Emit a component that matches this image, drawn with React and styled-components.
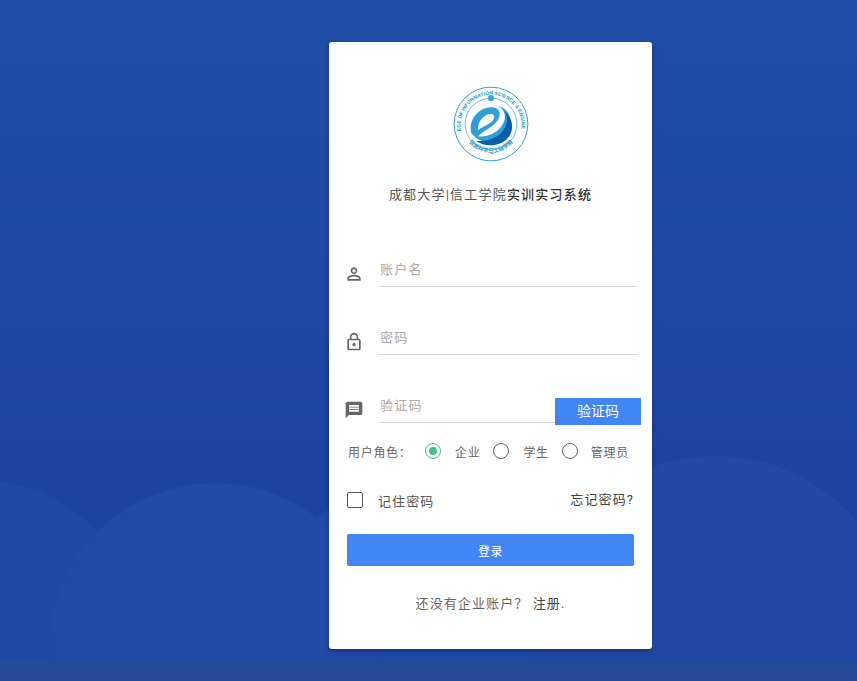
import React from "react";
import styled, { createGlobalStyle } from "styled-components";
import { MdPersonOutline, MdLockOutline, MdMessage } from "react-icons/md";

const GlobalStyle = createGlobalStyle`
  html, body {
    margin: 0;
    padding: 0;
    height: 100%;
    background: #1f4aa1;
    font-family: Roboto, "Noto Sans CJK SC", sans-serif;
  }
`;

const Page = styled.div`
  position: relative;
  box-sizing: border-box;
  width: 100%;
  height: 681px;
  overflow: hidden;
  padding: 42px 0 0 329px;
`;

const Backdrop = styled.svg`
  position: absolute;
  inset: 0;
  width: 100%;
  height: 100%;
`;

const Card = styled.main`
  position: relative;
  box-sizing: border-box;
  width: 323px;
  height: 607px;
  padding: 44px 18px 36px;
  background: #fff;
  border-radius: 3px;
  box-shadow: 0 2px 4px rgba(10, 30, 80, 0.55);
`;

const LogoWrap = styled.div`
  display: flex;
  justify-content: center;
  margin-left: 1px;
`;

const Title = styled.h1`
  margin: 23px 0 0;
  font-size: 13px;
  line-height: 20px;
  font-weight: 400;
  letter-spacing: 1.2px;
  text-align: center;
  color: #555;
  white-space: nowrap;

  b {
    font-weight: 500;
    color: #333;
  }
`;

const Field = styled.div`
  display: flex;
  align-items: flex-end;
  height: 32px;
  margin: ${(p) => (p.$first ? "50px" : "36px")} -3px 0 -3px;
`;

const FieldIcon = styled.span`
  display: flex;
  flex: none;
  width: 20px;
  height: 20px;
  margin: 0 15px 3px 0;
  color: #666;
  font-size: 20px;
`;

const Input = styled.input`
  flex: 1;
  min-width: 0;
  height: 32px;
  box-sizing: border-box;
  padding: 0 1px 2px;
  border: 0;
  border-bottom: 1px solid #ced4da;
  outline: none;
  background: transparent;
  font: inherit;
  font-size: 13px;
  letter-spacing: 1.2px;
  color: #555;

  &::placeholder {
    color: #aaa;
    opacity: 1;
  }
`;

const CodeButton = styled.button`
  flex: none;
  width: 86px;
  height: 27px;
  margin: 0 -4px -2px 0;
  padding: 0 0 3px;
  border: 0;
  background: #4285f4;
  color: #fff;
  font: inherit;
  font-size: 14px;
`;

const RoleRow = styled.div`
  display: flex;
  align-items: center;
  height: 20px;
  margin-top: 18px;
  padding-left: 1px;
  font-size: 12px;
  letter-spacing: 0.7px;
  color: #666;
`;

const RoleLabel = styled.span`
  width: 77px;
  flex: none;
`;

const RoleOption = styled.label`
  display: flex;
  align-items: center;
  gap: ${(p) => p.$gap}px;
  margin-right: ${(p) => p.$end}px;
`;

const Radio = styled.span`
  position: relative;
  box-sizing: border-box;
  width: 16px;
  height: 16px;
  border-radius: 50%;
  border: 1px solid ${(p) => (p.$on ? "#3fc48c" : "#666")};

  &::after {
    content: "";
    display: ${(p) => (p.$on ? "block" : "none")};
    position: absolute;
    inset: 3px;
    border-radius: 50%;
    background: #3fc48c;
  }
`;

const RememberRow = styled.div`
  display: flex;
  align-items: center;
  justify-content: space-between;
  height: 20px;
  margin-top: 29px;
`;

const Remember = styled.label`
  display: flex;
  align-items: center;
  gap: 15px;
  font-size: 13px;
  letter-spacing: 1.1px;
  color: #555;
`;

const Checkbox = styled.span`
  box-sizing: border-box;
  width: 16px;
  height: 16px;
  border: 1px solid #555;
  border-radius: 2px;
`;

const Forgot = styled.a`
  margin-top: -3px;
  font-size: 13px;
  letter-spacing: 1.1px;
  color: #444;
`;

const LoginButton = styled.button`
  display: block;
  width: 100%;
  height: 32px;
  margin-top: 24px;
  border: 0;
  border-radius: 2px;
  background: #4285f4;
  color: #fff;
  font: inherit;
  font-size: 12px;
  letter-spacing: 0.6px;
`;

const Footer = styled.p`
  margin: 28px 0 0;
  font-size: 13px;
  line-height: 20px;
  letter-spacing: 1.1px;
  text-align: center;
  color: #666;

  a {
    color: #444;
  }
`;

const Logo = () => (
  <svg width="76" height="76" viewBox="0 0 100 100">
    <defs>
      <path id="logoTop" d="M10.5 58 A40 40 0 1 1 89.5 58" />
      <path id="logoBottom" d="M17 68 A37.5 37.5 0 0 0 83 68" />
    </defs>
    <circle cx="50" cy="50" r="48.5" fill="#fff" stroke="#2aa3cf" strokeWidth="1.3" />
    <circle cx="50" cy="50" r="34" fill="#fff" stroke="#2aa3cf" strokeWidth="0.9" />
    <text fontSize="6.6" fill="#2098c6" fontFamily="Liberation Sans, sans-serif" fontWeight="700">
      <textPath href="#logoTop" startOffset="50%" textAnchor="middle">
        COLLEGE OF INFORMATION SCIENCE &amp; ENGINEERING
      </textPath>
    </text>
    <text fontSize="7.4" fill="#2098c6" fontFamily="Noto Sans CJK SC, sans-serif" fontWeight="700">
      <textPath href="#logoBottom" startOffset="50%" textAnchor="middle">
        信息科学与工程学院
      </textPath>
    </text>
    <circle cx="50" cy="16" r="4" fill="#36a9d8" />
    <path
      d="M24 62 C20 42 36 27 52 28 C62 29 64 38 58 46 C52 54 42 58 33 66 C43 68 56 63 63 54 C71 44 70 33 60 26 C76 32 80 48 72 61 C62 76 38 80 24 62 Z"
      fill="#2f9fdc"
    />
    <path
      d="M33 58 C32 46 42 36 51 37 C56 38 55 44 50 48 C44 52 38 54 33 58 Z"
      fill="#fff"
    />
    <path
      d="M30 72 C45 74 60 68 67 57 C72 49 72 40 68 33 C78 42 81 55 74 66 C65 79 44 82 30 72 Z"
      fill="#0b5fa8"
    />
  </svg>
);

export default function App() {
  return (
    <>
      <GlobalStyle />
      <Page>
        <Backdrop viewBox="0 0 857 681" preserveAspectRatio="none" aria-hidden="true">
          <defs>
            <linearGradient id="sky" x1="0" y1="0" x2="0" y2="1">
              <stop offset="0" stopColor="#214ea6" />
              <stop offset="0.72" stopColor="#1c43a0" />
              <stop offset="1" stopColor="#1c43a0" />
            </linearGradient>
          </defs>
          <rect width="857" height="681" fill="url(#sky)" />
          <circle cx="-20" cy="640" r="160" fill="#1f48a2" />
          <circle cx="450" cy="680" r="210" fill="#1f4aa8" />
          <circle cx="716" cy="640" r="184" fill="#2149a3" />
          <circle cx="215" cy="650" r="167" fill="#2149a6" />
          <rect y="662" width="857" height="19" fill="#254b94" />
        </Backdrop>
        <Card>
          <LogoWrap>
            <Logo />
          </LogoWrap>
          <Title>
            成都大学|信工学院<b>实训实习系统</b>
          </Title>
          <Field $first>
            <FieldIcon>
              <MdPersonOutline />
            </FieldIcon>
            <Input placeholder="账户名" />
          </Field>
          <Field>
            <FieldIcon>
              <MdLockOutline />
            </FieldIcon>
            <Input placeholder="密码" />
          </Field>
          <Field>
            <FieldIcon>
              <MdMessage />
            </FieldIcon>
            <Input placeholder="验证码" />
            <CodeButton>验证码</CodeButton>
          </Field>
          <RoleRow>
            <RoleLabel>用户角色：</RoleLabel>
            <RoleOption $gap={14} $end={13}>
              <Radio $on />
              企业
            </RoleOption>
            <RoleOption $gap={14} $end={13}>
              <Radio />
              学生
            </RoleOption>
            <RoleOption $gap={13} $end={0}>
              <Radio />
              管理员
            </RoleOption>
          </RoleRow>
          <RememberRow>
            <Remember>
              <Checkbox />
              记住密码
            </Remember>
            <Forgot>忘记密码?</Forgot>
          </RememberRow>
          <LoginButton>登录</LoginButton>
          <Footer>
            还没有企业账户？ <a>注册.</a>
          </Footer>
        </Card>
      </Page>
    </>
  );
}
